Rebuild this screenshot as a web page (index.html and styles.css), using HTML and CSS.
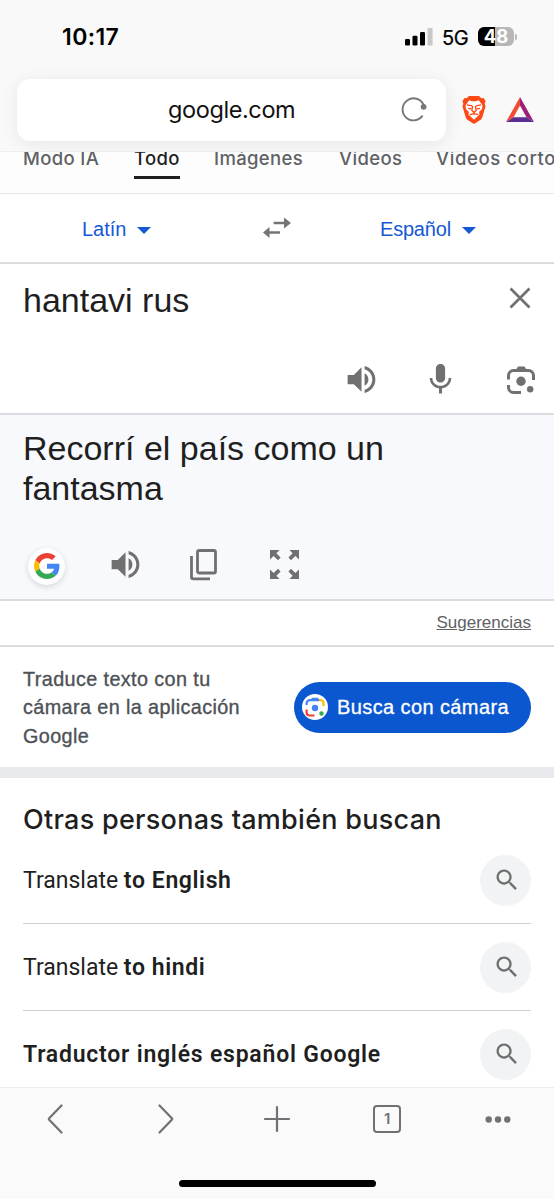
FILE: index.html
```
<!DOCTYPE html>
<html lang="es">
<head>
<meta charset="utf-8">
<title>google.com</title>
<link rel="stylesheet" href="styles.css">
</head>
<body>
<svg class="defs" width="0" height="0">
  <symbol id="volume" viewBox="0 0 24 24"><path d="M3 9v6h4l5 5V4L7 9H3zm13.5 3c0-1.77-1.02-3.29-2.5-4.03v8.05c1.48-.73 2.5-2.25 2.5-4.02zM14 3.23v2.06c2.89.86 5 3.54 5 6.71s-2.11 5.85-5 6.71v2.06c4.01-.91 7-4.49 7-8.77s-2.99-7.86-7-8.77z"/></symbol>
  <symbol id="search" viewBox="0 0 24 24"><path d="M15.5 14h-.79l-.28-.27C15.41 12.59 16 11.11 16 9.5 16 5.91 13.09 3 9.5 3S3 5.91 3 9.5 5.91 16 9.5 16c1.61 0 3.09-.59 4.23-1.57l.27.28v.79l5 4.99L20.49 19l-4.99-5zm-6 0C7.01 14 5 11.99 5 9.5S7.01 5 9.5 5 14 7.01 14 9.5 11.99 14 9.5 14z"/></symbol>
</svg>
<div class="phone">
  <header class="chrome">
    <div class="status">
      <span class="time">10:17</span>
      <svg class="signal" width="28" height="18" viewBox="0 0 28 18"><rect x="0" y="11" width="5" height="6.5" rx="1.3"/><rect x="7.5" y="7.7" width="5" height="9.8" rx="1.3"/><rect x="15" y="4" width="5" height="13.5" rx="1.3"/><rect x="22.6" y="0" width="5" height="17.5" rx="1.3" fill="#c8c8c8"/></svg>
      <span class="network">5G</span>
      <span class="battery">48</span><i class="nub"></i>
    </div>
    <div class="toolbar">
      <div class="url"><span>google.com</span>
        <svg class="reload" width="28" height="28" viewBox="0 0 28 28"><path d="M23.600 8.800A11 11 0 1 0 22.200 20.200" fill="none" stroke="#77777a" stroke-width="1.9" stroke-linecap="round"/><circle cx="23.600" cy="10.800" r="2.900" fill="#77777a"/></svg>
      </div>
      <svg class="brave" width="26" height="30" viewBox="0 0 26 30">
        <path d="M8 1h10l2.400 2.300 2.200-.3 2 3.200-.9 2.300.8 3-3.100 10.500c-.5 1.600-1.300 2.500-2.500 3.300L13 29l-5.900-3.700c-1.200-.8-2-1.700-2.500-3.300L1.500 11.500l.8-3-.9-2.300 2-3.200 2.200.3z" fill="#fb4a16"/>
        <path d="M8.300 5.300l2.700.9h4l2.700-.9 3.800 5-.5 3.600-2.900 3.200.4 2.300L13 24.800l-5.500-5.400.4-2.300L5 13.900l-.5-3.600z" fill="#fff"/>
        <path d="M5.800 9.900l5.400 1M20.200 9.900l-5.400 1M7 13.300l3.300.6M19 13.300l-3.300.6M11.600 10.800l-.7 4.700 2.100 2 2.100-2-.7-4.700M13 17.500v2.300M8.800 19.600l4.200-.9 4.200.9" fill="none" stroke="#fb4a16" stroke-width="1.300"/>
      </svg>
      <svg class="bat" width="28" height="25" viewBox="0 0 28 25"><path d="M14 0L0 25l7.500-4.700L14 8.500z" fill="#f34a32"/><path d="M14 0v8.500l6.500 11.800L28 25z" fill="#9b2079"/><path d="M0 25h28l-7.500-4.700h-13z" fill="#5b2d91"/></svg>
    </div>
  </header>

  <nav class="tabs">
    <span class="t1">Modo IA</span><span class="t2 active">Todo</span><span class="t3">Imágenes</span><span class="t4">Vídeos</span><span class="t5">Vídeos cortos</span>
  </nav>

  <section class="languages">
    <span class="lang latin">Latín<i class="caret"></i></span>
    <svg class="swap" width="28" height="22" viewBox="0 0 28 22" fill="#757575"><path d="M10.700 4.700h10.300V.5l7 5.500-7 5.500V7.300H10.700zM17 14.200H6.500V10l-6.500 5.500 6.500 5.500v-4.200H17z"/></svg>
    <span class="lang spanish">Español<i class="caret"></i></span>
  </section>

  <section class="source">
    <div class="source-top"><p class="big">hantavi rus</p>
      <svg width="22" height="22" viewBox="0 0 22 22"><path d="M1.500 1.500l19 19M20.500 1.500l-19 19" stroke="#707070" stroke-width="2.700"/></svg>
    </div>
    <div class="source-tools">
      <svg class="icon" width="37" height="37"><use href="#volume"/></svg>
      <svg class="icon" width="37" height="37" viewBox="0 0 24 24"><path d="M12 14c1.660 0 2.990-1.340 2.990-3L15 5c0-1.660-1.340-3-3-3S9 3.340 9 5v6c0 1.660 1.340 3 3 3zm5.300-3c0 3-2.540 5.100-5.300 5.100S6.700 14 6.700 11H5c0 3.410 2.720 6.230 6 6.720V21h2v-3.280c3.280-.48 6-3.300 6-6.720h-1.700z"/></svg>
      <svg class="icon" width="30" height="30" viewBox="0 0 30 30"><g fill="none" stroke="#707070" stroke-width="3"><path d="M2.500 14.500v-4a5 5 0 0 1 5-5h15a5 5 0 0 1 5 5v4.500M2.500 20v2.500a5 5 0 0 0 5 5H15"/></g><path d="M10 5l2-3.500h6.500l2 3.500z"/><circle cx="15" cy="16.300" r="4.700"/><circle cx="24.200" cy="24.300" r="3.200"/></svg>
    </div>
  </section>

  <section class="result">
    <p class="big">Recorrí el país como un fantasma</p>
    <div class="result-tools">
      <span class="google"><svg width="26" height="26" viewBox="0 0 48 48"><path fill="#EA4335" d="M24 9.500c3.540 0 6.710 1.220 9.210 3.600l6.850-6.850C35.900 2.380 30.470 0 24 0 14.620 0 6.510 5.380 2.560 13.220l7.980 6.190C12.430 13.720 17.740 9.500 24 9.500z"/><path fill="#4285F4" d="M46.980 24.550c0-1.570-.15-3.090-.38-4.550H24v9.020h12.940c-.58 2.960-2.260 5.480-4.780 7.180l7.730 6c4.510-4.180 7.090-10.360 7.090-17.650z"/><path fill="#FBBC05" d="M10.530 28.590c-.48-1.450-.76-2.990-.76-4.590s.27-3.140.76-4.590l-7.980-6.190C.92 16.460 0 20.120 0 24s.92 7.540 2.560 10.780z"/><path fill="#34A853" d="M24 48c6.480 0 11.930-2.130 15.890-5.810l-7.730-6c-2.150 1.450-4.920 2.300-8.160 2.300-6.260 0-11.570-4.220-13.470-9.910l-7.980 6.190C6.510 42.620 14.620 48 24 48z"/></svg></span>
      <svg class="icon vol" width="37" height="37"><use href="#volume"/></svg>
      <svg class="copy" width="27" height="32" viewBox="0 0 27 32" fill="none" stroke="#707070" stroke-width="2.800"><rect x="7.500" y="1.500" width="18" height="22.500" rx="1.800"/><path d="M1.500 7v21a1.800 1.800 0 0 0 1.800 1.800H20"/></svg>
      <svg class="expand" width="29" height="29" viewBox="0 0 29 29" fill="#707070"><path id="corner" d="M0 0h9.600L6.400 3.200 10.600 7.600 8 10.200 3.600 6 0 9.600z"/><use href="#corner" transform="matrix(-1 0 0 1 29 0)"/><use href="#corner" transform="matrix(1 0 0 -1 0 29)"/><use href="#corner" transform="matrix(-1 0 0 -1 29 29)"/></svg>
    </div>
  </section>

  <div class="suggest"><a>Sugerencias</a></div>

  <section class="camera">
    <p>Traduce texto con tu<br>cámara en la aplicación<br>Google</p>
    <div class="button">
      <svg width="26" height="26" viewBox="0 0 26 26"><circle cx="13" cy="13" r="13" fill="#fff"/><g fill="none" stroke-width="2.200"><path d="M4.600 11V9.300a3.200 3.200 0 0 1 3.200-3.200H17" stroke="#4285f4"/><path d="M17 6.100h1.500a3 3 0 0 1 3 3V12" stroke="#fbbc04"/><path d="M4.600 15.500v3a3 3 0 0 0 3 3H12.500" stroke="#ea4335"/></g><path d="M8.500 6l1.500-2.300h6L17.500 6z" fill="#4285f4"/><circle cx="13" cy="14" r="3.200" fill="#4285f4"/><circle cx="19.500" cy="19.500" r="2.200" fill="#34a853"/></svg>
      <span>Busca con cámara</span>
    </div>
  </section>

  <section class="related">
    <h2>Otras personas también buscan</h2>
    <div class="row"><span>Translate <b>to English</b></span><i class="round"><svg width="28" height="28"><use href="#search"/></svg></i></div>
    <div class="row"><span>Translate <b>to hindi</b></span><i class="round"><svg width="28" height="28"><use href="#search"/></svg></i></div>
    <div class="row"><b class="long">Traductor inglés español Google</b><i class="round"><svg width="28" height="28"><use href="#search"/></svg></i></div>
  </section>

  <footer class="bottom">
    <div class="buttons">
      <svg width="30" height="30" viewBox="0 0 30 30"><path d="M21.500 1.500L9.200 14.200a1.200 1.200 0 0 0 0 1.600L21.500 28.500"/></svg>
      <svg width="30" height="30" viewBox="0 0 30 30"><path d="M8.500 1.500l12.300 12.700a1.200 1.200 0 0 1 0 1.600L8.500 28.500"/></svg>
      <svg width="30" height="30" viewBox="0 0 30 30"><path d="M15 3v24M3 15h24"/></svg>
      <span class="count">1</span>
      <svg width="30" height="30" viewBox="0 0 30 30"><g fill="#707174" stroke="none"><circle cx="5.700" cy="15.500" r="3.200"/><circle cx="15" cy="15.500" r="3.200"/><circle cx="24.300" cy="15.500" r="3.200"/></g></svg>
    </div>
    <div class="home"></div>
  </footer>
</div>
</body>
</html>
```

FILE: styles.css
```
* { box-sizing: border-box; }
body { margin: 0; background: #fff; font-family: "Liberation Sans", Arial, sans-serif; color: #1f1f1f; }
p, h2 { margin: 0; font-weight: 400; }
i { font-style: normal; }
svg { display: block; flex: none; }
span, b { white-space: nowrap; }
.defs { position: absolute; }
.phone { width: 554px; height: 1199px; overflow: hidden; display: flex; flex-direction: column; }
.phone > * { flex: none; }

.chrome { height: 152px; background: #f9f9f9; border-bottom: 1px solid #efeff0; font-family: Inter, sans-serif; }
.status { height: 78px; padding: 26px 0 0 62px; display: flex; align-items: flex-start; color: #000; }
.time { width: 343px; font-size: 23px; line-height: 23px; font-weight: 600; letter-spacing: .4px; }
.signal { margin-top: 2px; }
.network { margin-left: 9px; width: 36px; font-size: 20px; line-height: 24px; letter-spacing: -.3px; -webkit-text-stroke: .25px #000; }
.battery { margin-top: 1px; width: 36px; height: 19px; border-radius: 6px; background: linear-gradient(90deg, #000 48%, #b7b7b7 48%); color: #fff; font-size: 18.500px; line-height: 19px; font-weight: 700; text-align: center; }
.nub { width: 2px; height: 6px; margin: 8px 0 0 1px; border-radius: 0 2px 2px 0; background: #b7b7b7; }
.toolbar { padding: 0 0 0 17px; display: flex; }
.url { width: 429px; height: 62px; margin-top: .5px; border-radius: 13px; background: #fff; box-shadow: 0 3px 18px rgba(0,0,0,.08); display: flex; align-items: center; padding-left: 151px; font-size: 23.500px; color: #111; }
.url span { width: 232px; letter-spacing: -.4px; }
.brave { margin: 17px 0 0 15px; }
.bat { margin: 19px 0 0 19px; }

.tabs { height: 42px; border-bottom: 1px solid #e6e6e9; overflow: hidden; display: flex; padding-left: 23px; font: 500 18.500px/20px Inter, sans-serif; letter-spacing: .35px; color: #606164; background: #fdfdfe; }
.tabs span { height: 31px; margin-top: -4px; flex: none; }
.t1 { width: 76px; margin-right: 35px; }
.t2 { width: 46px; margin-right: 34px; }
.t3 { width: 90px; margin-right: 35px; }
.t4 { width: 62px; margin-right: 35px; }
.t5 { letter-spacing: .6px; }
.tabs .active { color: #1f1f1f; border-bottom: 3px solid #1f1f1f; }

.languages { height: 70px; border-bottom: 2px solid #dadce0; display: flex; align-items: center; padding-left: 82px; color: #1558d6; }
.lang { display: flex; align-items: center; font-size: 20px; line-height: 24px; padding-top: 1px; }
.latin { width: 181px; }
.spanish { margin-left: 89px; letter-spacing: -.2px; }
.caret { margin: 4px 0 0 11px; border: 7px solid transparent; border-top: 7px solid #1558d6; border-bottom: 0; }

.big { font-size: 34px; line-height: 40px; letter-spacing: 0; }
.source { height: 151px; border-bottom: 2px solid #dadce0; padding-left: 23px; }
.source-top { height: 97px; padding: 16px 23px 0 0; display: flex; justify-content: space-between; }
.source-top svg { margin-top: 7px; }
.source-tools { display: flex; align-items: center; padding-left: 319.500px; gap: 42.500px; }
.source-tools svg:last-child { margin-left: 4px; }
.icon { fill: #707070; }
.result { height: 186px; background: #f8f9fc; border-bottom: 2px solid #dadce0; padding: 13px 0 0 23px; }
.result .big { width: 390px; }
.result-tools { height: 38px; margin-top: 39px; display: flex; align-items: center; }
.google { width: 37px; height: 37px; margin-left: 5px; border-radius: 50%; background: #fff; box-shadow: 0 2px 6px rgba(0,0,0,.14); display: grid; place-items: center; }
.vol { margin: 0 0 4px 41.500px; }
.copy { margin: 0 0 3px 46.500px; }
.expand { margin: 0 0 3px 53px; }

.suggest { height: 46px; border-bottom: 2px solid #dadce0; padding: 12px 23px 0; text-align: right; font-size: 17px; line-height: 20px; color: #606164; text-decoration: underline; }
.camera { height: 131px; border-bottom: 11px solid #e8eaed; display: flex; justify-content: space-between; padding: 17.500px 23px 0; }
.camera p { color: #4d5156; font-size: 19.800px; line-height: 28.500px; letter-spacing: .4px; -webkit-text-stroke: .35px #4d5156; white-space: nowrap; }
.button { width: 237px; height: 51px; margin-top: 17px; border-radius: 26px; background: #0b57d0; color: #fff; display: flex; align-items: center; padding-left: 8px; gap: 9px; font-size: 20px; letter-spacing: .4px; -webkit-text-stroke: .3px #fff; }

.related { height: 309px; overflow: hidden; padding: 24px 23px 0; font-family: Roboto, sans-serif; }
.related h2 { font-family: Inter, sans-serif; font-size: 27px; font-weight: 500; line-height: 36px; letter-spacing: .28px; height: 35px; white-space: nowrap; }
.row { height: 87px; border-bottom: 1px solid #cfd0d2; display: flex; align-items: center; justify-content: space-between; font-size: 23px; }
.row b { font-weight: 600; letter-spacing: .6px; }
.row .long { letter-spacing: .78px; }
.round { width: 51px; height: 51px; border-radius: 50%; background: #f1f3f4; display: grid; place-items: center; fill: #707070; }
.round svg { margin: 0 0 1px 3px; }

.bottom { height: 112px; background: #fafafa; border-top: 1px solid #ededee; }
.buttons { height: 92px; padding: 16px 41px 0 40px; display: flex; justify-content: space-between; align-items: flex-start; fill: none; stroke: #707174; stroke-width: 2.200px; stroke-linecap: round; }
.count { width: 28px; height: 28px; border: 2px solid #707174; border-radius: 4px; margin: 1px; font: 600 15px/24px Inter, sans-serif; text-align: center; color: #707174; }
.home { width: 197px; height: 7px; margin: 0 auto; border-radius: 4px; background: #000; }
```
